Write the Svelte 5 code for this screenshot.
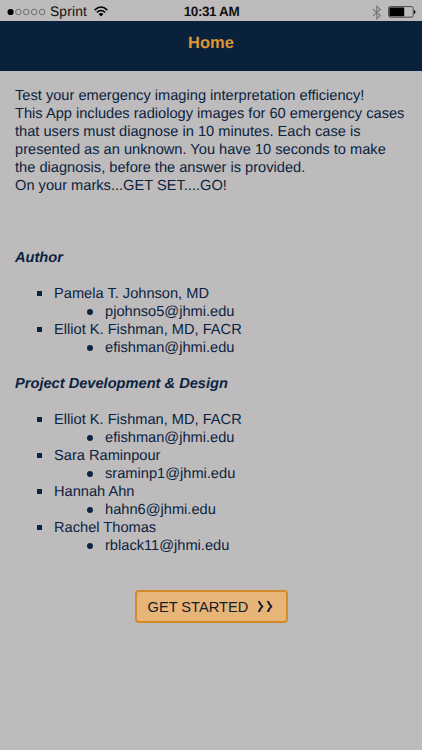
<script>
  const intro = [
    'Test your emergency imaging interpretation efficiency!',
    'This App includes radiology images for 60 emergency cases',
    'that users must diagnose in 10 minutes. Each case is',
    'presented as an unknown. You have 10 seconds to make',
    'the diagnosis, before the answer is provided.',
    'On your marks...GET SET....GO!'
  ];
  const sections = [
    {
      title: 'Author',
      people: [
        { name: 'Pamela T. Johnson, MD', email: 'pjohnso5@jhmi.edu' },
        { name: 'Elliot K. Fishman, MD, FACR', email: 'efishman@jhmi.edu' }
      ]
    },
    {
      title: 'Project Development & Design',
      people: [
        { name: 'Elliot K. Fishman, MD, FACR', email: 'efishman@jhmi.edu' },
        { name: 'Sara Raminpour', email: 'sraminp1@jhmi.edu' },
        { name: 'Hannah Ahn', email: 'hahn6@jhmi.edu' },
        { name: 'Rachel Thomas', email: 'rblack11@jhmi.edu' }
      ]
    }
  ];
</script>

<div class="screen">
  <div class="status">
    <div class="left">
      <svg width="40" height="8" viewBox="0 0 40 8">
        <circle cx="3.6" cy="4" r="3.1" fill="#000" />
        {#each [11.4, 19.3, 27.2, 35.1] as cx}
          <circle {cx} cy="4" r="2.8" fill="none" stroke="#4a4a4c" stroke-width=".7" />
        {/each}
      </svg>
      <span class="carrier">Sprint</span>
      <svg class="wifi" width="14" height="11" viewBox="0 0 14 11">
        <path d="M.6 4.1Q7-2 13.4 4.1M2.9 6.4Q7 2.5 11.1 6.4" fill="none" stroke="#000" stroke-width="1.5" />
        <path d="M4.6 8Q7 5.8 9.4 8L7 10.5Z" fill="#000" />
      </svg>
    </div>
    <div class="time">10:31 AM</div>
    <div class="right">
      <svg width="10" height="15" viewBox="0 0 10 15">
        <path d="M1 4.2 8.2 10.6 4.8 13.8V1.2L8.2 4.4 1 10.8" fill="none" stroke="#747376" stroke-width="1.1" />
      </svg>
      <svg width="28" height="12" viewBox="0 0 28 12">
        <rect x=".6" y=".6" width="24.6" height="10.6" rx="1.8" fill="none" stroke="#39383a" stroke-width=".9" />
        <rect x="1.4" y="1.5" width="14.8" height="8.8" rx=".6" fill="#000" />
        <path d="M26 3.9q1.5.5 1.5 2t-1.5 2z" fill="#000" />
      </svg>
    </div>
  </div>
  <header>Home</header>
  <main>
    <p>
      {#each intro as line}<span class="line">{line}</span>{/each}
    </p>
    {#each sections as section}
      <h2>{section.title}</h2>
      <ul>
        {#each section.people as person}
          <li>
            <div class="name">{person.name}</div>
            <div class="email">{person.email}</div>
          </li>
        {/each}
      </ul>
    {/each}
    <button>
      <span>GET STARTED</span>
      <svg width="17" height="13" viewBox="0 0 17 13">
        <path d="M.8 1H2.9Q4.4 4.6 6.6 6.5 4.4 8.4 2.9 12H.8Q1.9 8.6 4 6.5 1.9 4.4.8 1ZM9.8 1h2.1q1.5 3.6 3.7 5.5-2.2 1.9-3.7 5.5H9.8q1.1-3.4 3.2-5.5Q10.9 4.4 9.8 1Z" fill="#14202c" />
      </svg>
    </button>
  </main>
</div>

<style>
  .screen {
    width: 422px;
    height: 750px;
    overflow: hidden;
    background: #bdbbbc;
    color: #0b2340;
    font-family: 'Liberation Sans', Arial, sans-serif;
    font-size: 14.63px;
    line-height: 18px;
    text-rendering: geometricPrecision;
  }
  .status {
    height: 21px;
    display: grid;
    grid-template-columns: 1fr auto 1fr;
    align-items: center;
    color: #111;
    box-sizing: border-box;
    padding: 3px 6px 0 7px;
  }
  .left, .right { display: flex; align-items: center; }
  .right { justify-content: flex-end; gap: 6px; }
  .carrier { font-size: 13.8px; margin-left: 3px; letter-spacing: 0.15px; }
  .wifi { margin: 0 0 2px 7px; }
  .time { font-size: 13.5px; font-weight: 700; letter-spacing: -0.4px; }
  header {
    height: 50px;
    background: #0a213c;
    color: #df9434;
    font-weight: 700;
    font-size: 16.5px;
    line-height: 44px;
    text-align: center;
  }
  main { display: flex; flex-direction: column; padding: 16px 15px 0; }
  p { margin: 0 0 54px; }
  .line { display: block; white-space: nowrap; }
  h2 {
    margin: 0 0 18px;
    font-size: 14.63px;
    line-height: 18px;
    font-style: italic;
    font-weight: 700;
  }
  ul { list-style: none; margin: 0 0 18px; padding: 0 0 0 22px; }
  .name, .email { display: flex; align-items: center; white-space: nowrap; }
  .name::before {
    content: '';
    width: 5px;
    height: 5px;
    margin: 0 12px 2px 0;
    background: #0b2340;
  }
  .email { padding-left: 50px; }
  .email::before {
    content: '';
    width: 6px;
    height: 6px;
    margin: 0 12px 1px 0;
    border-radius: 50%;
    background: #0b2340;
  }
  button {
    align-self: center;
    display: flex;
    align-items: center;
    gap: 9px;
    box-sizing: border-box;
    width: 153px;
    height: 33px;
    margin: 17px 0 0;
    padding: 0 11px;
    border: 2px solid #d4892b;
    border-radius: 4px;
    background: #e8b578;
    color: #14202c;
    font: 14.63px 'Liberation Sans', Arial, sans-serif;
    white-space: nowrap;
  }
</style>
